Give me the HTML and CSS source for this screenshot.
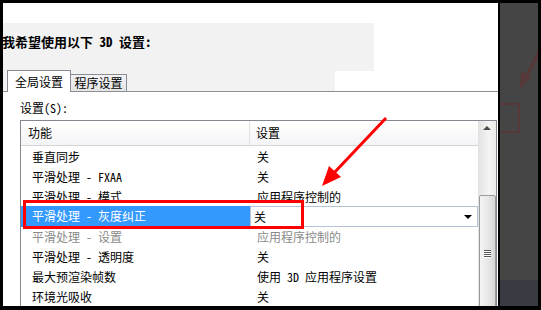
FILE: index.html
```html
<!DOCTYPE html>
<html lang="zh-CN">
<head>
<meta charset="utf-8">
<title>3D 设置</title>
<link rel="stylesheet" href="styles.css">
</head>
<body>
<div class="frame">
  <main class="main">
    <div class="topgap"></div>
    <div class="hero"><h1 class="title">我希望使用以下 3D 设置:</h1></div>
    <div class="tabrow">
      <div class="tabstrip">
        <div class="tab active">全局设置</div>
        <div class="tab">程序设置</div>
      </div>
    </div>
    <div class="label">设置(S):</div>
    <div class="list">
      <div class="list-body">
        <div class="header"><div class="h1">功能</div><div class="h2">设置</div></div>
        <div class="rows">
          <div class="row"><div class="c1">垂直同步</div><div class="c2">关</div></div>
          <div class="row"><div class="c1">平滑处理 - FXAA</div><div class="c2">关</div></div>
          <div class="row"><div class="c1">平滑处理 - 模式</div><div class="c2">应用程序控制的</div></div>
          <div class="row selected"><div class="c1">平滑处理 - 灰度纠正</div><div class="c2 combo"><span>关</span><span class="caret"></span></div></div>
          <div class="row disabled"><div class="c1">平滑处理 - 设置</div><div class="c2">应用程序控制的</div></div>
          <div class="row"><div class="c1">平滑处理 - 透明度</div><div class="c2">关</div></div>
          <div class="row"><div class="c1">最大预渲染帧数</div><div class="c2">使用 3D 应用程序设置</div></div>
          <div class="row"><div class="c1">环境光吸收</div><div class="c2">关</div></div>
        </div>
      </div>
      <div class="scrollbar">
        <div class="sb-up"><span class="up-tri"></span></div>
        <div class="thumb"><span class="grip"></span><span class="grip"></span><span class="grip"></span><span class="grip"></span></div>
      </div>
    </div>
  </main>
  <aside class="side">
    <div class="side-top">
      <svg class="side-svg" width="38" height="277" viewBox="0 0 38 277">
        <line x1="40" y1="47" x2="25" y2="76" stroke="#573838" stroke-width="3"/>
        <polygon points="20,86 21,68 31,74" fill="#573838"/>
        <rect x="-2" y="101" width="21" height="28" fill="none" stroke="#573838" stroke-width="2"/>
      </svg>
    </div>
    <div class="side-bottom"></div>
  </aside>
  <div class="redbox"></div>
  <svg class="arrow" width="541" height="310" viewBox="0 0 541 310">
    <line x1="386" y1="118" x2="333" y2="174" stroke="#ff0000" stroke-width="3"/>
    <polygon points="322,186 329,166 341,177" fill="#ff0000"/>
  </svg>
</div>
</body>
</html>
```

FILE: styles.css
```css
* { box-sizing: border-box; }
html, body { margin: 0; padding: 0; background: #000; }
body {
  font-family: "Noto Sans Mono CJK SC", "Noto Sans CJK SC", "Liberation Sans", sans-serif;
  font-size: 12px;
  color: #000;
}
.frame {
  position: relative;
  width: 541px;
  height: 310px;
  padding: 3px 3px 4px 3px;
  display: flex;
  gap: 2px;
  background: #000;
  overflow: hidden;
}
.main {
  width: 495px;
  height: 303px;
  background: #fff;
  overflow: hidden;
  flex: none;
}
.topgap { height: 20px; }
.hero {
  width: 371px;
  height: 48px;
  background: #f2f2f2;
  padding-top: 12px;
}
.title {
  margin: 0 0 0 -1px;
  font-size: 13px;
  line-height: 14px;
  font-weight: bold;
  white-space: nowrap;
}
.tabrow {
  height: 21px;
  border-bottom: 1px solid #8d8f94;
}
.tabstrip {
  width: 332px;
  height: 20px;
  background: #f2f2f2;
  display: flex;
  align-items: flex-end;
  padding-left: 4px;
}
.tab {
  height: 17px;
  width: 57px;
  margin-left: -1px;
  border: 1px solid #898c95;
  border-bottom: none;
  background: linear-gradient(#f3f3f3, #e4e4e4);
  text-align: center;
  line-height: 16px;
  white-space: nowrap;
}
.tab.active {
  position: relative;
  z-index: 1;
  width: 64px;
  height: 22px;
  margin-left: 0;
  margin-bottom: -1px;
  background: #fff;
  line-height: 21px;
}
.label {
  margin-top: 8px;
  height: 16px;
  line-height: 16px;
  padding-left: 17px;
}
.list {
  margin: 4px 1px 0 17px;
  height: 200px;
  border: 1px solid #828790;
  display: flex;
}
.list-body {
  flex: 1;
  min-width: 0;
}
.header {
  height: 25px;
  display: flex;
  background: linear-gradient(#ffffff, #f3f4f6);
  border-bottom: 1px solid #d5d5d5;
  line-height: 24px;
}
.h1 {
  width: 229px;
  padding-left: 7px;
  border-right: 1px solid #e0e0e0;
}
.h2 { padding-left: 6px; flex: 1; }
.rows { padding-top: 1px; }
.row {
  height: 20px;
  line-height: 20px;
  display: flex;
  white-space: nowrap;
}
.c1 { width: 229px; padding-left: 11px; }
.c2 { flex: 1; padding-left: 7px; }
.row.disabled { color: #8a8a8a; }
.row.selected .c1 { background: #3399ff; color: #fff; }
.row.selected { margin-top: -1px; height: 21px; }
.combo {
  display: flex;
  align-items: center;
  justify-content: space-between;
  padding-left: 3px;
  padding-right: 5px;
  border: 1px solid #b5c3d6;
  background: #fff;
  line-height: 18px;
}
.caret {
  width: 0;
  height: 0;
  border-left: 4px solid transparent;
  border-right: 4px solid transparent;
  border-top: 4px solid #000;
}
.scrollbar {
  width: 18px;
  background: linear-gradient(to right, #e2e2e2, #f4f4f4 60%, #ebebeb);
  display: flex;
  flex-direction: column;
  align-items: center;
}
.sb-up {
  height: 17px;
  width: 100%;
  display: flex;
  align-items: center;
  justify-content: center;
}
.up-tri {
  width: 0;
  height: 0;
  border-left: 4px solid transparent;
  border-right: 4px solid transparent;
  border-bottom: 4px solid #4a4a4a;
}
.thumb {
  margin-top: 60px;
  width: 17px;
  height: 140px;
  border: 1px solid #9a9a9a;
  border-radius: 2px;
  background: linear-gradient(to right, #f4f4f4, #e8e8e8 50%, #d6d6d6);
  display: flex;
  flex-direction: column;
  align-items: center;
  padding-top: 54px;
  gap: 1px;
}
.grip {
  width: 7px;
  height: 1px;
  background: #555;
  box-shadow: 0 1px 0 #fff;
}
.side {
  width: 38px;
  height: 303px;
  display: flex;
  flex-direction: column;
  flex: none;
}
.side-top { flex: 1; background: #454545; overflow: hidden; }
.side-svg { display: block; }
.side-bottom { height: 26px; background: #383c42; }
.redbox {
  position: absolute;
  left: 23px;
  top: 200px;
  width: 281px;
  height: 29px;
  border: 3px solid #ff0000;
}
.arrow {
  position: absolute;
  left: 0;
  top: 0;
  pointer-events: none;
}
```
